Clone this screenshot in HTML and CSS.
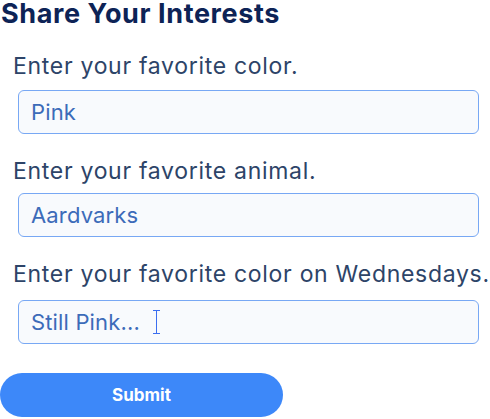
FILE: index.html
```html
<!DOCTYPE html>
<html lang="en">
<head>
<meta charset="utf-8">
<title>Share Your Interests</title>
<link rel="stylesheet" href="styles.css">
</head>
<body>
<form class="form">
  <h1 class="title">Share Your Interests</h1>
  <div class="field field-1">
    <label class="label">Enter your favorite color.</label>
    <div class="input"><span class="value">Pink</span></div>
  </div>
  <div class="field field-2">
    <label class="label">Enter your favorite animal.</label>
    <div class="input"><span class="value">Aardvarks</span></div>
  </div>
  <div class="field field-3">
    <label class="label">Enter your favorite color on Wednesdays.</label>
    <div class="input"><span class="value">Still Pink...</span><span class="ibeam"></span></div>
  </div>
  <button type="button" class="submit">Submit</button>
</form>
</body>
</html>
```
FILE: styles.css
```css
html, body {
  margin: 0;
  padding: 0;
  background: #ffffff;
}
body {
  width: 490px;
  height: 419px;
  overflow: hidden;
  font-family: Inter, "Noto Sans", sans-serif;
}
.form {
  display: flex;
  flex-direction: column;
}
.title {
  margin: 0;
  padding: 0 0 0 1px;
  font-size: 27px;
  line-height: 28px;
  font-weight: 700;
  color: #0d2356;
  letter-spacing: 0.6px;
  white-space: nowrap;
}
.field {
  display: flex;
  flex-direction: column;
}
.field-1 { margin-top: 24px; }
.field-2 { margin-top: 23px; }
.field-3 { margin-top: 23px; }
.label {
  padding-left: 13px;
  font-size: 23px;
  line-height: 28px;
  color: #2d4468;
  font-weight: 400;
  letter-spacing: 0.7px;
  white-space: nowrap;
}
.input {
  margin: 10px 0 0 18px;
  width: 461px;
  height: 44px;
  box-sizing: border-box;
  border: 1px solid #78a8f4;
  border-radius: 6px;
  background: #f8fafd;
  display: flex;
  align-items: center;
  padding-left: 12px;
  font-size: 22px;
  letter-spacing: 0.15px;
  color: #3c6bb9;
}
.field-2 .input { margin-top: 8px; }
.field-3 .input { margin-top: 12px; }
.ibeam {
  position: relative;
  width: 7px;
  height: 24px;
  margin-left: 13px;
  border-top: 1.5px solid #3b6ef0;
  border-bottom: 1.5px solid #3b6ef0;
  box-sizing: border-box;
}
.ibeam::after {
  content: "";
  position: absolute;
  left: 3px;
  top: 0;
  bottom: 0;
  width: 1.5px;
  background: #3b6ef0;
}
.submit {
  margin-top: 29px;
  width: 283px;
  height: 44px;
  border: none;
  border-radius: 22px;
  background: #3d88f9;
  color: #ffffff;
  font-family: Inter, "Noto Sans", sans-serif;
  font-size: 17px;
  font-weight: 700;
  padding: 0;
}
```
